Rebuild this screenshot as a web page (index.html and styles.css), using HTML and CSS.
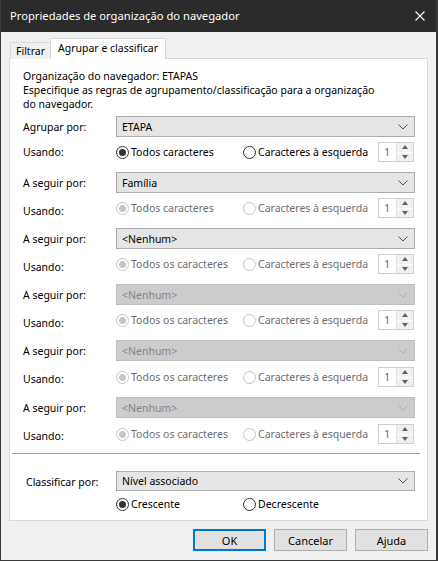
FILE: index.html
```html
<!DOCTYPE html>
<html lang="pt">
<head>
    <meta charset="UTF-8">
    <title>Propriedades de organização do navegador</title>
    <link rel="stylesheet" href="styles.css">
</head>
<body>
<div class="window">
    <div class="titlebar">
        <span class="title">Propriedades de organização do navegador</span>
        <svg class="close" width="10" height="10" viewBox="0 0 10 10"><path d="M0.5 0.5 L9.5 9.5 M9.5 0.5 L0.5 9.5" stroke="#fff" stroke-width="1.1" fill="none"/></svg>
    </div>

    <div class="client">
        <div class="tabs">
            <div class="tab">Filtrar</div>
            <div class="tab active">Agrupar e classificar</div>
        </div>

        <div class="panel">
            <p class="intro">Organização do navegador: ETAPAS<br>Especifique as regras de agrupamento/classificação para a organização<br>do navegador.</p>

            <div class="group first">
                <div class="field-row">
                    <span class="label">Agrupar por:</span>
                    <div class="combo"><span>ETAPA</span><svg class="chev" width="10" height="6" viewBox="0 0 10 6"><path d="M0.5 0.5 L5 5 L9.5 0.5" fill="none" stroke="#505050"/></svg></div>
                </div>
                <div class="using-row">
                    <span class="label">Usando:</span>
                    <span class="radio opt1"><i class="dot checked"></i>Todos caracteres</span>
                    <span class="radio opt2"><i class="dot"></i>Caracteres à esquerda</span>
                    <span class="spin"><span class="spin-val">1</span><span class="spin-btns"><b class="up"></b><b class="down"></b></span></span>
                </div>
            </div>

            <div class="group">
                <div class="field-row">
                    <span class="label">A seguir por:</span>
                    <div class="combo"><span>Família</span><svg class="chev" width="10" height="6" viewBox="0 0 10 6"><path d="M0.5 0.5 L5 5 L9.5 0.5" fill="none" stroke="#505050"/></svg></div>
                </div>
                <div class="using-row off">
                    <span class="label low">Usando:</span>
                    <span class="radio opt1"><i class="dot checked"></i>Todos caracteres</span>
                    <span class="radio opt2"><i class="dot"></i>Caracteres à esquerda</span>
                    <span class="spin"><span class="spin-val">1</span><span class="spin-btns"><b class="up"></b><b class="down"></b></span></span>
                </div>
            </div>

            <div class="group">
                <div class="field-row">
                    <span class="label">A seguir por:</span>
                    <div class="combo"><span>&lt;Nenhum&gt;</span><svg class="chev" width="10" height="6" viewBox="0 0 10 6"><path d="M0.5 0.5 L5 5 L9.5 0.5" fill="none" stroke="#505050"/></svg></div>
                </div>
                <div class="using-row off">
                    <span class="label low">Usando:</span>
                    <span class="radio opt1"><i class="dot checked"></i>Todos os caracteres</span>
                    <span class="radio opt2"><i class="dot"></i>Caracteres à esquerda</span>
                    <span class="spin"><span class="spin-val">1</span><span class="spin-btns"><b class="up"></b><b class="down"></b></span></span>
                </div>
            </div>

            <div class="group">
                <div class="field-row">
                    <span class="label">A seguir por:</span>
                    <div class="combo disabled"><span>&lt;Nenhum&gt;</span><svg class="chev" width="10" height="6" viewBox="0 0 10 6"><path d="M0.5 0.5 L5 5 L9.5 0.5" fill="none" stroke="#b0b0b0"/></svg></div>
                </div>
                <div class="using-row off">
                    <span class="label low">Usando:</span>
                    <span class="radio opt1"><i class="dot checked"></i>Todos os caracteres</span>
                    <span class="radio opt2"><i class="dot"></i>Caracteres à esquerda</span>
                    <span class="spin"><span class="spin-val">1</span><span class="spin-btns"><b class="up"></b><b class="down"></b></span></span>
                </div>
            </div>

            <div class="group">
                <div class="field-row">
                    <span class="label">A seguir por:</span>
                    <div class="combo disabled"><span>&lt;Nenhum&gt;</span><svg class="chev" width="10" height="6" viewBox="0 0 10 6"><path d="M0.5 0.5 L5 5 L9.5 0.5" fill="none" stroke="#b0b0b0"/></svg></div>
                </div>
                <div class="using-row off wide">
                    <span class="label mid">Usando:</span>
                    <span class="radio opt1"><i class="dot checked"></i>Todos os caracteres</span>
                    <span class="radio opt2"><i class="dot"></i>Caracteres à esquerda</span>
                    <span class="spin"><span class="spin-val">1</span><span class="spin-btns"><b class="up"></b><b class="down"></b></span></span>
                </div>
            </div>

            <div class="group">
                <div class="field-row">
                    <span class="label">A seguir por:</span>
                    <div class="combo disabled"><span>&lt;Nenhum&gt;</span><svg class="chev" width="10" height="6" viewBox="0 0 10 6"><path d="M0.5 0.5 L5 5 L9.5 0.5" fill="none" stroke="#b0b0b0"/></svg></div>
                </div>
                <div class="using-row off wide">
                    <span class="label mid">Usando:</span>
                    <span class="radio opt1"><i class="dot checked"></i>Todos os caracteres</span>
                    <span class="radio opt2"><i class="dot"></i>Caracteres à esquerda</span>
                    <span class="spin"><span class="spin-val">1</span><span class="spin-btns"><b class="up"></b><b class="down"></b></span></span>
                </div>
            </div>

            <div class="sep"></div>

            <div class="sort">
                <div class="field-row sort-row">
                    <span class="label">Classificar por:</span>
                    <div class="combo"><span>Nível associado</span><svg class="chev" width="10" height="6" viewBox="0 0 10 6"><path d="M0.5 0.5 L5 5 L9.5 0.5" fill="none" stroke="#505050"/></svg></div>
                </div>
                <div class="order-row">
                    <span class="radio opt1"><i class="dot checked"></i>Crescente</span>
                    <span class="radio"><i class="dot"></i>Decrescente</span>
                </div>
            </div>
        </div>

        <div class="buttons">
            <button class="btn default">OK</button>
            <button class="btn">Cancelar</button>
            <button class="btn">Ajuda</button>
        </div>
    </div>
</div>
</body>
</html>
```

FILE: styles.css
```css
* { box-sizing: border-box; }
html, body { margin: 0; padding: 0; }
body {
    font-family: "Noto Sans", "DejaVu Sans", sans-serif;
    font-size: 10.5px;
    color: #000;
    background: #f0f0f0;
}

.window {
    width: 438px;
    height: 561px;
    background: #f0f0f0;
    border-left: 1px solid #3a3a3a;
    border-right: 2px solid #3a3a3a;
    border-bottom: 1px solid #3a3a3a;
}

/* title bar */
.titlebar {
    height: 32px;
    background: #2b2b2b;
    color: #fff;
    display: flex;
    align-items: center;
    padding-left: 9px;
    padding-right: 11px;
}
.title { flex: 1; font-size: 11.2px; padding-bottom: 1px; }
.close { display: block; margin-top: -1px; }

.client { padding: 7px 8px 0 8px; }

/* tabs */
.tabs {
    display: flex;
    align-items: flex-end;
    height: 20px;
    padding-left: 1px;
    position: relative;
    z-index: 1;
    margin-bottom: -1px;
}
.tab {
    height: 17px;
    padding: 0 5px;
    border: 1px solid #d9d9d9;
    border-bottom: none;
    background: #f0f0f0;
    line-height: 17px;
}
.tab.active {
    height: 21px;
    background: #fff;
    padding: 0 7px;
    margin-left: -1px;
    line-height: 19px;
}

/* tab page */
.panel {
    height: 463px;
    background: #fff;
    border: 1px solid #d9d9d9;
    padding: 0 12px 0 13px;
}
.intro {
    margin: 0;
    padding-top: 10px;
    line-height: 14px;
    white-space: nowrap;
}

.group { margin-top: 10px; }
.group.first { margin-top: 5px; margin-bottom: 4px; }

.field-row {
    display: flex;
    align-items: center;
    height: 21px;
}
.label { width: 93px; flex: none; }
.field-row .label { padding-top: 1px; }
.label.low { padding-top: 6px; }
.label.mid { padding-top: 4px; }

.combo {
    flex: 1;
    height: 21px;
    display: flex;
    align-items: center;
    padding: 0 4px 0 5px;
    background: #e5e5e5;
    border: 1px solid #adadad;
}
.combo span { flex: 1; }
.combo.disabled {
    background: #cccccc;
    border-color: #bfbfbf;
    color: #838383;
}
.chev { display: block; margin-right: 2px; }

.using-row {
    display: flex;
    align-items: center;
    height: 20px;
    margin-top: 5px;
}
.using-row.wide { margin-top: 6px; }
.using-row.off .radio { color: #6d6d6d; }

.radio { display: flex; align-items: center; white-space: nowrap; }
.radio.opt1 { width: 127px; }
.radio.opt2 { width: 135px; }

.dot {
    width: 13px;
    height: 13px;
    border: 1px solid #333;
    border-radius: 50%;
    background: #fff;
    margin-right: 2px;
    flex: none;
    position: relative;
}
.dot.checked::after {
    content: "";
    position: absolute;
    left: 2px;
    top: 2px;
    width: 7px;
    height: 7px;
    border-radius: 50%;
    background: #333;
}
.using-row.off .dot { border-color: #c6c6c6; }
.using-row.off .dot.checked::after { background: #c6c6c6; }

/* numeric spinner */
.spin {
    width: 36px;
    height: 20px;
    display: flex;
    border: 1px solid #cfcfcf;
    background: #fff;
}
.spin-val { flex: 1; padding-left: 5px; line-height: 18px; color: #6d6d6d; font-size: 11px; }
.spin-btns {
    width: 17px;
    display: flex;
    flex-direction: column;
    border-left: 1px solid #e3e3e3;
}
.spin-btns b {
    flex: 1;
    background: #f0f0f0;
    display: flex;
    align-items: center;
    justify-content: center;
}
.spin-btns b + b { border-top: 1px solid #fff; }
.spin-btns .up::after {
    content: "";
    border-left: 3px solid transparent;
    border-right: 3px solid transparent;
    border-bottom: 4px solid #606060;
}
.spin-btns .down::after {
    content: "";
    border-left: 3px solid transparent;
    border-right: 3px solid transparent;
    border-top: 4px solid #606060;
}

.sep {
    height: 1px;
    background: #a0a0a0;
    margin: 9px -5px 0 -11px;
}

.sort { margin-top: 17px; }
.sort-row { height: 20px; }
.sort-row .combo { height: 20px; }
.sort-row .label { padding-left: 3px; }
.order-row {
    display: flex;
    align-items: center;
    height: 20px;
    margin-top: 3px;
    padding-left: 93px;
}

/* dialog buttons */
.buttons {
    display: flex;
    justify-content: flex-end;
    gap: 8px;
    margin-top: 8px;
}
.btn {
    width: 73px;
    height: 22px;
    font: inherit;
    font-size: 11px;
    background: #e1e1e1;
    border: 1px solid #adadad;
    padding: 0;
    color: #000;
}
.btn.default { border: 2px solid #0078d7; }
```
